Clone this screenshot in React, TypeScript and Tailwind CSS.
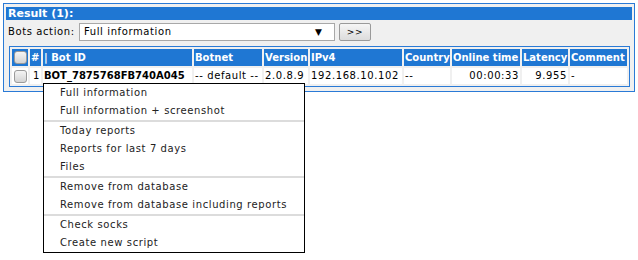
import React from 'react'

const cols = [
  { label: '', w: 'w-[16px]' },
  { label: '#', w: 'w-[11px]' },
  { label: '| Bot ID', w: 'w-[149px]' },
  { label: 'Botnet', w: 'w-[68px]' },
  { label: 'Version', w: 'w-[44px]' },
  { label: 'IPv4', w: 'w-[92px]' },
  { label: 'Country', w: 'w-[46px]' },
  { label: 'Online time', w: 'w-[68px]' },
  { label: 'Latency', w: 'w-[46px]' },
  { label: 'Comment', w: 'w-[57px]' },
]

const menu: (string | null)[] = [
  'Full information',
  'Full information + screenshot',
  null,
  'Today reports',
  'Reports for last 7 days',
  'Files',
  null,
  'Remove from database',
  'Remove from database including reports',
  null,
  'Check socks',
  'Create new script',
]

function Check() {
  return (
    <div className="mx-auto w-[13px] h-[13px] rounded-[3px] border border-[#9a9a9a] bg-gradient-to-b from-[#f4f4f4] to-[#d4d4d4]" />
  )
}

export default function App() {
  return (
    <div
      className="relative w-[638px] h-[260px] bg-white p-[3px] text-[10px] leading-none text-black"
      style={{ fontFamily: '"DejaVu Sans", Verdana, sans-serif' }}
    >
      <div className="w-[632px] border border-[#2a7ad6] bg-[#f0f0f0] p-[2px] pb-[4px]">
        <div className="mt-[1px] h-[13px] bg-[#1f77d3] px-[2px] flex items-center text-white font-bold text-[11px]">
          Result (1):
        </div>
        <div className="mt-[3px] flex items-center h-[18px] pl-[2px] tracking-[0.6px]">
          <span className="w-[71px]">Bots action:</span>
          <div className="w-[256px] h-[18px] border border-[#a8a8a8] bg-white flex items-center px-[4px]">
            <span className="flex-1">Full information</span>
            <span className="text-[9px] mr-[8px] tracking-normal">▼</span>
          </div>
          <div className="ml-[4px] w-[32px] h-[18px] border border-[#9a9a9a] rounded-[2px] bg-gradient-to-b from-[#f6f6f6] to-[#dcdcdc] flex items-center justify-center text-[9px]">
            &gt;&gt;
          </div>
        </div>
        <table className="mt-[5px] ml-[3px] table-fixed border-separate border-spacing-[2px] border border-[#2a7ad6] w-[621px]">
          <thead>
            <tr className="h-[17px]">
              {cols.map((c, i) => (
                <th
                  key={i}
                  className={`${c.w} bg-[#1f77d3] text-white font-bold text-left px-[1px] whitespace-nowrap overflow-hidden p-0 text-[10px]`}
                >
                  {i === 0 ? <Check /> : c.label}
                </th>
              ))}
            </tr>
          </thead>
          <tbody className="tracking-[0.6px]">
            <tr className="h-[16px] bg-white">
              <td className="p-0">
                <Check />
              </td>
              <td className="text-right pr-[1px] p-0">1</td>
              <td className="font-bold px-[1px] p-0 whitespace-nowrap tracking-normal">BOT_7875768FB740A045</td>
              <td className="px-[1px] p-0 whitespace-nowrap">-- default --</td>
              <td className="px-[1px] p-0">2.0.8.9</td>
              <td className="px-[1px] p-0">192.168.10.102</td>
              <td className="px-[1px] p-0">--</td>
              <td className="text-right pr-[1px] p-0">00:00:33</td>
              <td className="text-right pr-[1px] p-0">9.955</td>
              <td className="px-[1px] p-0">-</td>
            </tr>
          </tbody>
        </table>
      </div>

      <div className="absolute left-[43px] top-[83px] w-[262px] border border-black bg-white text-[#222] tracking-[0.6px]">
        {menu.map((m, i) =>
          m === null ? (
            <div key={i} className="h-[2px] bg-[#dcdcdc]" />
          ) : (
            <div key={i} className="h-[18px] flex items-center pl-[16px] whitespace-nowrap">
              {m}
            </div>
          ),
        )}
      </div>
    </div>
  )
}
